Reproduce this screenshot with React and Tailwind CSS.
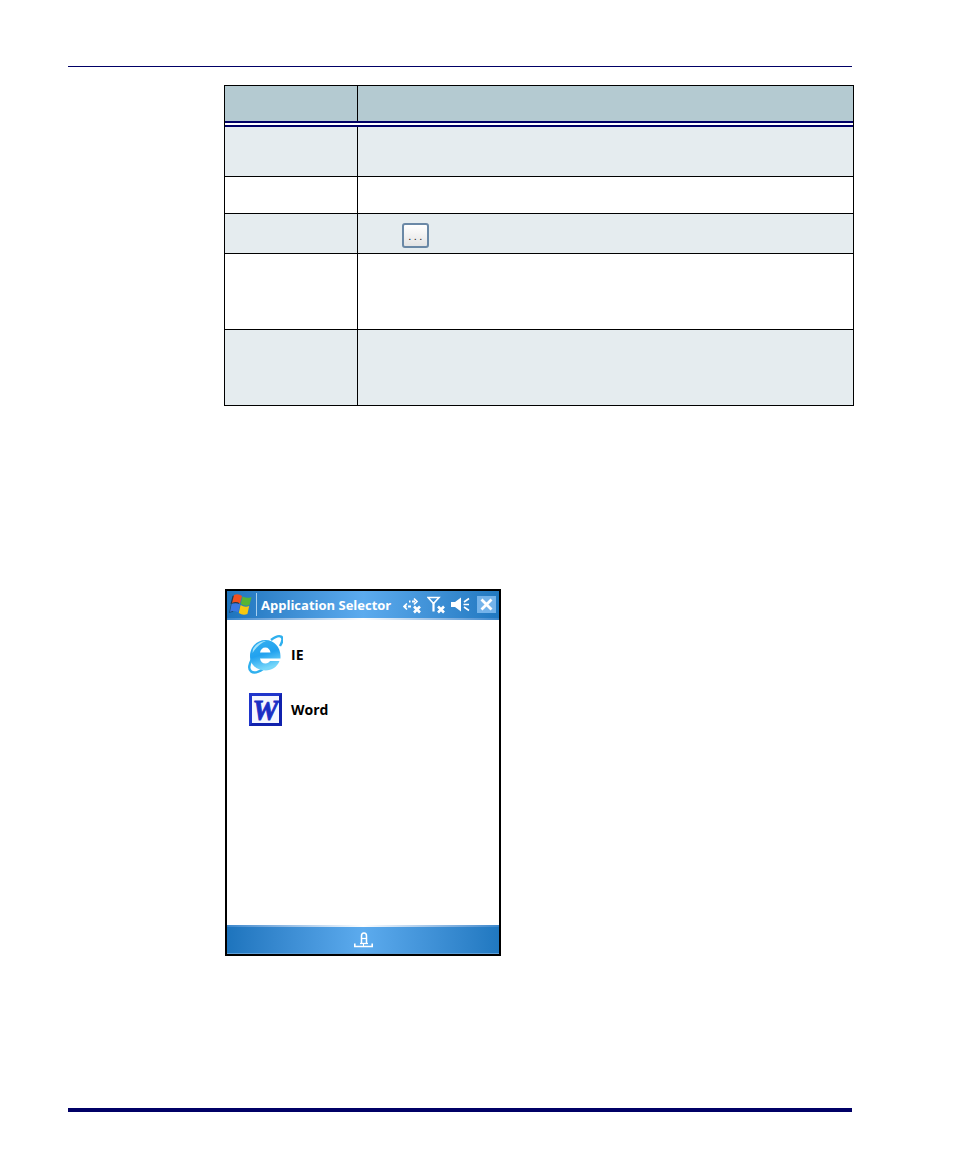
import React from "react";

const Row = ({ h, shaded, children }) => (
  <div className={`flex border-b border-black ${h} ${shaded ? "bg-[#e5ecef]" : "bg-white"}`}>
    <div className="w-[133px] shrink-0 border-r border-black" />
    <div className="flex-1 flex items-center pl-[44px]">{children}</div>
  </div>
);

const Flag = () => (
  <svg width="24" height="24" viewBox="0 0 24 24" className="shrink-0 ml-[1px]">
    <path d="M5 2 Q9 0 13 3 L11 11 Q7 8 3 10 Z" fill="#1c1c1c" opacity=".7" transform="translate(-1.5 1)" />
    <path d="M2 11 Q4 10 6 10 L4 19 Q2 19 0 20 Z" fill="#1c1c1c" opacity=".5" />
    <path d="M5 2 Q9 0 13 3 L11 10.5 Q7 8 3 10 Z" fill="#f0501f" />
    <path d="M13.6 3.4 Q18 6 22.5 4 L20.5 12 Q16 14 11.8 11 Z" fill="#55b534" />
    <path d="M2.6 11 Q7 9 11 11.6 L9.2 19.5 Q5 17 1 19 Z" fill="#3a78e4" />
    <path d="M11.6 12 Q16 15 20.2 13 L18.4 21 Q14 23 9.8 20 Z" fill="#f8c80f" />
  </svg>
);

const Arrows = () => (
  <svg width="19" height="18" viewBox="0 0 19 18" className="shrink-0" fill="none" stroke="#fff">
    <path d="M6 5.5h1.5M9 5.5h3" strokeWidth="1.8" />
    <path d="M11 2.5l3 3-3 3" strokeWidth="1.7" />
    <path d="M2 10.5h1.5M5 10.5h3" strokeWidth="1.8" />
    <path d="M4 7.5l-3 3 3 3" strokeWidth="1.7" />
    <path d="M11 10.5l6 6M17 10.5l-6 6" strokeWidth="2.6" />
  </svg>
);

const Antenna = () => (
  <svg width="19" height="18" viewBox="0 0 19 18" className="shrink-0" fill="none" stroke="#fff">
    <path d="M1 1.5h11L6.5 7.5Z" strokeWidth="1.6" />
    <path d="M6.5 6v9.5" strokeWidth="2.2" />
    <path d="M11 10.5l6 6M17 10.5l-6 6" strokeWidth="2.6" />
  </svg>
);

const Speaker = () => (
  <svg width="19" height="18" viewBox="0 0 19 18" className="shrink-0" fill="none" stroke="#fff">
    <path d="M0 6h4L10 1.5v14L4 11H0Z" fill="#fff" stroke="none" />
    <path d="M18 2.5l-5 3.5M12.5 8.5h5.5M13 11l5 3.5" strokeWidth="1.6" />
  </svg>
);

const CloseBox = () => (
  <div className="w-[19px] h-[17px] bg-[#74b3ea] flex items-center justify-center shrink-0">
    <svg width="13" height="13" viewBox="0 0 13 13" fill="none" stroke="#fff" strokeWidth="2.8">
      <path d="M1.5 1.5l10 10M11.5 1.5l-10 10" />
    </svg>
  </div>
);

const IEIcon = () => (
  <svg width="36" height="40" viewBox="0 0 36 40" className="shrink-0" fill="none">
    <defs>
      <linearGradient id="ieg" x1="0" y1="0" x2="0.3" y2="1">
        <stop offset="0" stopColor="#35b0f0" />
        <stop offset=".55" stopColor="#22a2ef" />
        <stop offset="1" stopColor="#78d8fa" />
      </linearGradient>
    </defs>
    <path d="M5 25C-2 38 6 42 16 35M24 6C33 -1 39 2 33 12" stroke="#2fb0ee" strokeWidth="2.4" />
    <path fillRule="evenodd" d="M3 22C3 13 10 6 18.5 6C27 6 33.5 13 33.5 22V24.5H13C13.5 27.5 15.5 29.5 18.5 29.5C20.5 29.5 22 28.5 23 27H32.5C30 33 25 36.5 18.5 36.5C10 36.5 3 31 3 22ZM13 18.5H23.5C23 15.5 21.3 13.5 18.3 13.5C15.5 13.5 13.6 15.5 13 18.5Z" fill="url(#ieg)" />
    <path d="M6 15C9 10 14 7 19 7C14 9 9 13 5.5 19Z" fill="#a3e4fb" />
  </svg>
);

const WordIcon = () => (
  <div className="mt-[1px] w-[33px] h-[33px] shrink-0 border-[3px] border-[#1f35cb] border-b-[#1021ad] border-r-[#1021ad] bg-[#f4f6ff] flex items-center justify-center overflow-hidden pt-[2px]">
    <span className="text-[#1a2ec4] font-bold italic text-[29px] leading-none [font-family:'Liberation_Serif',serif] [-webkit-text-stroke:0.9px_#1a2ec4]">W</span>
  </div>
);

const LockIcon = () => (
  <svg width="19" height="16" viewBox="0 0 19 16" fill="none" stroke="#fff">
    <path d="M0.8 11.5v3h17.4v-3" strokeWidth="1.6" />
    <path d="M9.5 12v2" strokeWidth="1" />
    <path d="M7.5 11V4Q7.5 1 10 1T12.5 4V11" strokeWidth="1.5" />
    <path d="M7.5 6.5h5" strokeWidth="1.2" />
    <path d="M6 11.5h8" strokeWidth="1.3" />
  </svg>
);

const sheen = "h-[2px] bg-gradient-to-r from-[#3a87cc] via-white to-[#3a87cc]";
const bar = "bg-gradient-to-r from-[#1d74bd] via-[#5cabee] to-[#2078c0]";
const tahoma = "[font-family:'Open_Sans',sans-serif]";

export default function App() {
  return (
    <div className="w-[954px] h-[1158px] bg-white pt-[66px] [font-family:'Liberation_Sans',sans-serif]">
      <div className="ml-[68px] w-[784px] h-[1px] bg-[#000066]" />
      <div className="ml-[224px] mt-[18px] w-[630px] border border-black border-b-0">
        <div className="flex h-[35px] bg-[#b4cad1]">
          <div className="w-[133px] border-r border-black" />
          <div className="flex-1" />
        </div>
        <div className="h-[6px] bg-[#000066] flex flex-col justify-center">
          <div className="h-[2px] bg-white" />
        </div>
        <Row h="h-[50px]" shaded />
        <Row h="h-[37px]" />
        <Row h="h-[40px]" shaded>
          <div className="mt-[4px] w-[27px] h-[25px] rounded-[3px] border-2 border-[#6a88a6] bg-gradient-to-b from-white to-[#e4e4e4] flex items-center justify-center text-[11px] leading-none tracking-[2.5px] text-[#222] pt-[2px] pl-[2px]">
            ...
          </div>
        </Row>
        <Row h="h-[76px]" />
        <Row h="h-[76px]" shaded />
      </div>

      <div className="ml-[225px] mt-[183px] w-[276px] h-[367px] border-2 border-black flex flex-col bg-white">
        <div className={`h-[27px] ${bar} flex items-center pl-[1px] pr-[3px]`}>
          <Flag />
          <div className="ml-[3px] w-[1px] h-[23px] bg-[#a8d0f0]" />
          <span className={`ml-[4px] mt-[1px] text-white font-bold text-[13px] leading-none whitespace-nowrap ${tahoma}`}>Application Selector</span>
          <div className="ml-auto flex items-center gap-[5px]">
            <Arrows />
            <Antenna />
            <Speaker />
            <div className="ml-[2px]"><CloseBox /></div>
          </div>
        </div>
        <div className={sheen} />
        <div className="flex-1 pl-[20px] pt-[14px] flex flex-col">
          <div className="flex items-center h-[40px]">
            <IEIcon />
            <span className={`ml-[8px] mt-[1px] font-bold text-[14px] text-black ${tahoma}`}>IE</span>
          </div>
          <div className="flex items-center h-[34px] mt-[18px] pl-[2px]">
            <WordIcon />
            <span className={`ml-[9px] mt-[1px] font-bold text-[14px] text-black ${tahoma}`}>Word</span>
          </div>
        </div>
        <div className={sheen} />
        <div className={`h-[27px] ${bar} border-b border-[#5d9fd8] flex items-center justify-center`}>
          <LockIcon />
        </div>
      </div>

      <div className="ml-[68px] mt-[152px] w-[784px] h-[4px] bg-[#000066]" />
    </div>
  );
}
